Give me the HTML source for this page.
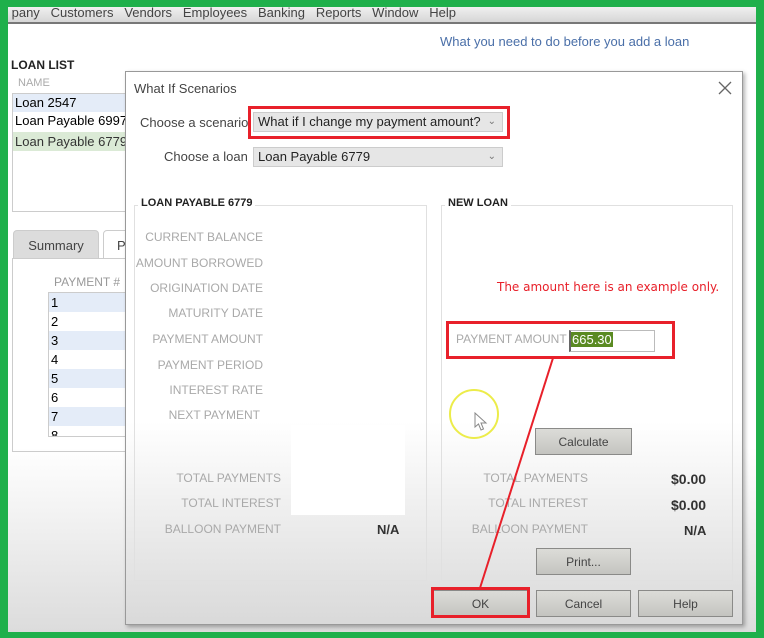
<!DOCTYPE html>
<html><head><style>
*{margin:0;padding:0;box-sizing:border-box}
body{width:764px;height:638px;background:#1fb04b;position:relative;overflow:hidden;font-family:"Liberation Sans",Arial,sans-serif}
.a{position:absolute;white-space:nowrap}
.lbl{position:absolute;color:#a9a9a9;font-size:12px;text-align:right;white-space:nowrap}
.btn{position:absolute;background:linear-gradient(#dcdcd8,#c4c4c0);border:1px solid #8a8a88;font-size:12px;color:#444;text-align:center;line-height:26px}
.rd{position:absolute;border:3px solid #e8202a}
</style></head><body>
<div class="a" style="left:8px;top:7px;width:748px;height:625px;background:linear-gradient(#fff 0,#fff 440px,#dcdcdc 625px)"></div>
<div class="a" style="left:8px;top:7px;width:748px;height:17px;background:linear-gradient(#f0f0f0,#d6d6d6);border-bottom:2px solid #777;font-size:13px;color:#444;line-height:12px;white-space:nowrap">&nbsp;pany&nbsp;&nbsp; Customers&nbsp;&nbsp; Vendors&nbsp;&nbsp; Employees&nbsp;&nbsp; Banking&nbsp;&nbsp; Reports&nbsp;&nbsp; Window&nbsp;&nbsp; Help</div>
<div class="a" style="left:440px;top:34px;font-size:13px;color:#4a6fa8">What you need to do before you add a loan</div>
<div class="a" style="left:11px;top:58px;font-size:12px;font-weight:bold;color:#222">LOAN LIST</div>
<div class="a" style="left:18px;top:77px;font-size:11px;color:#aaa">NAME</div>
<div class="a" style="left:12px;top:93px;width:114px;height:119px;border:1px solid #ccc;background:#fff"></div>
<div class="a" style="left:13px;top:94px;width:113px;height:18px;background:#e4ecf8;font-size:13px;line-height:18px;padding-left:2px">Loan 2547</div>
<div class="a" style="left:13px;top:113px;font-size:13px;padding-left:2px">Loan Payable 6997</div>
<div class="a" style="left:13px;top:132px;width:113px;height:19px;background:#dbead6;font-size:13px;line-height:19px;padding-left:2px;color:#333">Loan Payable 6779</div>
<div class="a" style="left:13px;top:230px;width:86px;height:29px;background:#dcdcdc;border:1px solid #ccc;border-radius:4px 4px 0 0;font-size:13px;color:#444;text-align:center;line-height:29px">Summary</div>
<div class="a" style="left:103px;top:230px;width:30px;height:29px;background:#fff;border:1px solid #ccc;border-radius:4px 4px 0 0;font-size:13px;color:#444;padding:7px 0 0 13px">P</div>
<div class="a" style="left:12px;top:258px;width:114px;height:194px;border:1px solid #ccc;border-right:none"></div>
<div class="a" style="left:54px;top:275px;font-size:12px;color:#999">PAYMENT #</div>
<div class="a" style="left:48px;top:292px;width:78px;height:145px;border:1px solid #ccc;font-size:13px;line-height:19px;overflow:hidden">
<div style="background:#e4ecf8;padding-left:2px">1</div><div style="padding-left:2px">2</div><div style="background:#e4ecf8;padding-left:2px">3</div><div style="padding-left:2px">4</div><div style="background:#e4ecf8;padding-left:2px">5</div><div style="padding-left:2px">6</div><div style="background:#e4ecf8;padding-left:2px">7</div><div style="padding-left:2px">8</div></div>

<!-- dialog -->
<div class="a" style="left:125px;top:71px;width:618px;height:554px;border:1px solid #999;background:linear-gradient(#fff 0,#fff 350px,#d9d9d9 554px);box-shadow:2px 2px 4px rgba(0,0,0,.3)"></div>
<div class="a" style="left:134px;top:81px;font-size:13px;color:#444">What If Scenarios</div>
<svg class="a" style="left:718px;top:81px" width="14" height="14"><path d="M1 1L13 13M13 1L1 13" stroke="#666" stroke-width="1.3"/></svg>
<div class="a" style="left:140px;top:115px;font-size:13px;color:#444">Choose a scenario</div>
<div class="a" style="left:253px;top:112px;width:250px;height:20px;background:#e6e6e6;border:1px solid #ccc;font-size:13px;line-height:18px;padding-left:4px;color:#222">What if I change my payment amount?<span style="position:absolute;right:6px;color:#777;font-size:10px">&#8964;</span></div>
<div class="rd" style="left:248px;top:106px;width:262px;height:33px"></div>
<div class="a" style="left:164px;top:149px;font-size:13px;color:#444">Choose a loan</div>
<div class="a" style="left:253px;top:147px;width:250px;height:20px;background:#e6e6e6;border:1px solid #ccc;font-size:13px;line-height:18px;padding-left:4px;color:#222">Loan Payable 6779<span style="position:absolute;right:6px;color:#777;font-size:10px">&#8964;</span></div>

<div class="a" style="left:134px;top:205px;width:293px;height:376px;border:1px solid #e0e0e0"></div>
<div class="a" style="left:138px;top:197px;background:#fff;padding:0 3px;font-size:11px;font-weight:bold;color:#222">LOAN PAYABLE 6779</div>
<div class="lbl" style="right:501px;top:230px">CURRENT BALANCE</div>
<div class="lbl" style="right:501px;top:256px">AMOUNT BORROWED</div>
<div class="lbl" style="right:501px;top:281px">ORIGINATION DATE</div>
<div class="lbl" style="right:501px;top:306px">MATURITY DATE</div>
<div class="lbl" style="right:501px;top:332px">PAYMENT AMOUNT</div>
<div class="lbl" style="right:501px;top:358px">PAYMENT PERIOD</div>
<div class="lbl" style="right:501px;top:383px">INTEREST RATE</div>
<div class="lbl" style="right:504px;top:408px">NEXT PAYMENT</div>
<div class="a" style="left:291px;top:425px;width:114px;height:90px;background:#fff"></div>
<div class="lbl" style="right:483px;top:471px">TOTAL PAYMENTS</div>
<div class="lbl" style="right:483px;top:496px">TOTAL INTEREST</div>
<div class="lbl" style="right:483px;top:522px">BALLOON PAYMENT</div>
<div class="a" style="left:377px;top:522px;font-size:13px;font-weight:bold;color:#333">N/A</div>

<div class="a" style="left:441px;top:205px;width:292px;height:376px;border:1px solid #e0e0e0"></div>
<div class="a" style="left:445px;top:197px;background:#fff;padding:0 3px;font-size:11px;font-weight:bold;color:#222">NEW LOAN</div>
<div class="a" style="left:497px;top:280px;color:#e8202a;font-family:'DejaVu Sans',sans-serif;font-size:12px">The amount here is an example only.</div>
<div class="lbl" style="left:456px;top:332px">PAYMENT AMOUNT</div>
<div class="a" style="left:569px;top:330px;width:86px;height:22px;border:1px solid #bbb;border-left:2px solid #666"><span style="background:#5a8a22;color:#fff;font-size:13px;padding:0 1px">665.30</span></div>
<div class="rd" style="left:446px;top:321px;width:229px;height:38px"></div>
<div class="a" style="left:449px;top:389px;width:50px;height:50px;border:2px solid #ecec4a;border-radius:50%"></div>
<svg class="a" style="left:474px;top:412px" width="14" height="20"><path d="M1 1L1 15L4.5 12L7 18L9.5 17L7 11L12 11Z" fill="#fff" stroke="#888" stroke-width="1"/></svg>
<div class="btn" style="left:535px;top:428px;width:97px;height:27px">Calculate</div>
<div class="lbl" style="right:176px;top:471px">TOTAL PAYMENTS</div>
<div class="lbl" style="right:176px;top:496px">TOTAL INTEREST</div>
<div class="lbl" style="right:176px;top:522px">BALLOON PAYMENT</div>
<div class="a" style="left:671px;top:471px;font-size:14px;font-weight:bold;color:#333">$0.00</div>
<div class="a" style="left:671px;top:497px;font-size:14px;font-weight:bold;color:#333">$0.00</div>
<div class="a" style="left:684px;top:523px;font-size:13px;font-weight:bold;color:#333">N/A</div>
<div class="btn" style="left:536px;top:548px;width:95px;height:27px">Print...</div>
<div class="btn" style="left:433px;top:590px;width:95px;height:27px">OK</div>
<div class="btn" style="left:536px;top:590px;width:95px;height:27px">Cancel</div>
<div class="btn" style="left:638px;top:590px;width:95px;height:27px">Help</div>
<div class="rd" style="left:431px;top:587px;width:99px;height:31px"></div>
<svg class="a" style="left:0;top:0" width="764" height="638"><line x1="553" y1="358" x2="480" y2="588" stroke="#e8202a" stroke-width="2"/></svg>
</body></html>
